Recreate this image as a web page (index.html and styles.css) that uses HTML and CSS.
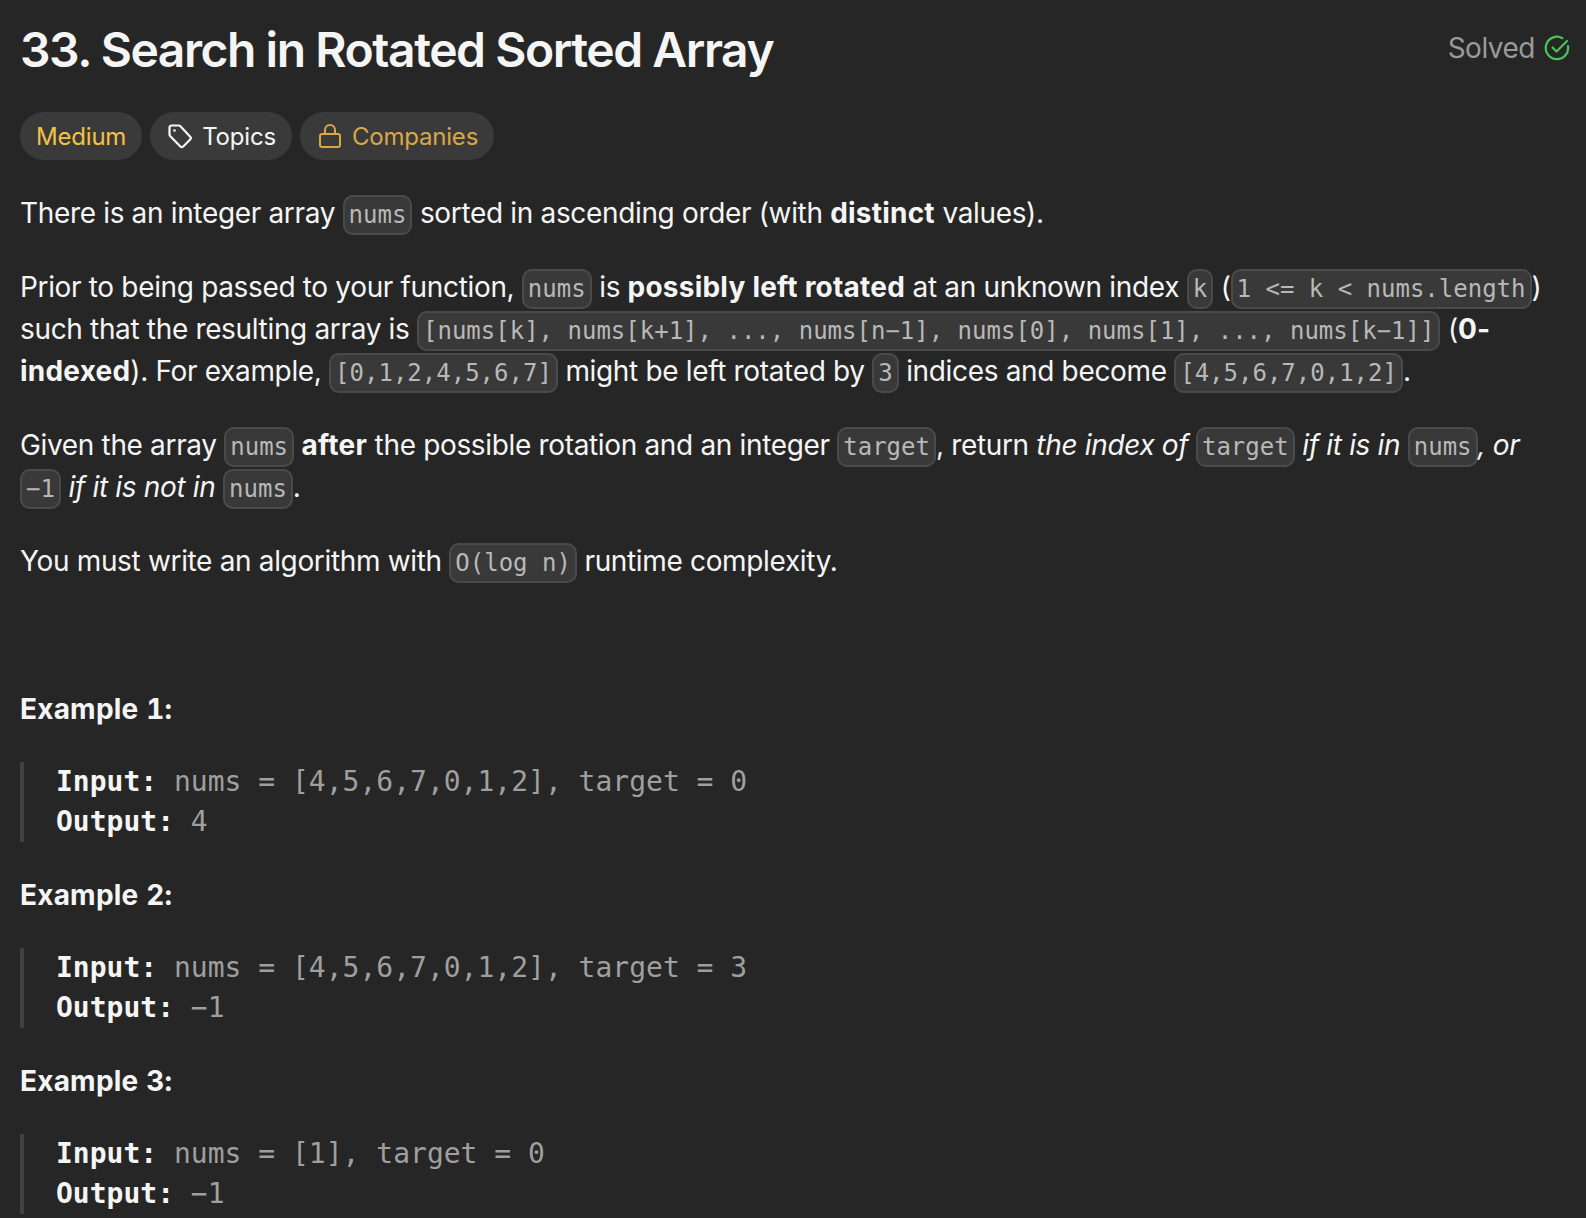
FILE: index.html
```html
<!DOCTYPE html>
<html lang="en">
<head>
    <meta charset="UTF-8">
    <meta name="viewport" content="width=device-width, initial-scale=1.0">
    <title>Search in Rotated Sorted Array</title>
    <link rel="stylesheet" href="styles.css">
</head>
<body>
    <div class="container">
        <div class="header">
            <h1>33. Search in Rotated Sorted Array</h1>
            <div class="solved">
                Solved
                <svg width="26" height="26" viewBox="0 0 26 26" fill="none" stroke="#4cc35a" stroke-width="2.2" stroke-linecap="round" stroke-linejoin="round">
                    <path d="M24 11.2A11.2 11.2 0 1 1 18.4 3.2"/>
                    <path d="M8.5 12.5l4 4L23 6"/>
                </svg>
            </div>
        </div>

        <div class="tags">
            <span class="tag medium">Medium</span>
            <span class="tag">
                <svg width="28" height="26" viewBox="-1 0 28 26" fill="none" stroke="currentColor" stroke-width="2.2" stroke-linejoin="round">
                    <path d="M2.5 4.500a2 2 0 0 1 2-2h7.200a2 2 0 0 1 1.500.6l10 10.600a2 2 0 0 1 0 2.800l-7 7a2 2 0 0 1-2.800 0L3.100 12.900a2 2 0 0 1-.6-1.500z"/>
                    <circle cx="7.500" cy="7.500" r="1.300" fill="currentColor" stroke="none"/>
                </svg>
                Topics
            </span>
            <span class="tag companies">
                <svg width="28" height="26" viewBox="0 0 28 26" fill="none" stroke="currentColor" stroke-width="2" stroke-linejoin="round">
                    <rect x="4" y="11" width="20" height="13" rx="2"/>
                    <path d="M9 11V7a5 5 0 0 1 10 0v4"/>
                </svg>
                Companies
            </span>
        </div>

        <div class="description">
            <p>There is an integer array <code>nums</code> sorted in ascending order (with <strong>distinct</strong> values).</p>

            <p>Prior to being passed to your function, <code>nums</code> is <strong>possibly left rotated</strong> at an unknown index <code>k</code> (<code>1 &lt;= k &lt; nums.length</code>) such that the resulting array is <code>[nums[k], nums[k+1], ..., nums[n&minus;1], nums[0], nums[1], ..., nums[k&minus;1]]</code> (<strong>0-indexed</strong>). For example, <code>[0,1,2,4,5,6,7]</code> might be left rotated by <code>3</code> indices and become <code>[4,5,6,7,0,1,2]</code>.</p>

            <p>Given the array <code>nums</code> <strong>after</strong> the possible rotation and an integer <code>target</code>, return <em>the index of </em><code>target</code><em> if it is in </em><code>nums</code><em>, or </em><code>&minus;1</code><em> if it is not in </em><code>nums</code>.</p>

            <p>You must write an algorithm with <code>O(log n)</code> runtime complexity.</p>

            <p class="spacer">&nbsp;</p>

            <p class="example-title"><strong>Example 1:</strong></p>
            <pre><strong>Input:</strong> nums = [4,5,6,7,0,1,2], target = 0
<strong>Output:</strong> 4</pre>

            <p class="example-title"><strong>Example 2:</strong></p>
            <pre><strong>Input:</strong> nums = [4,5,6,7,0,1,2], target = 3
<strong>Output:</strong> &minus;1</pre>

            <p class="example-title"><strong>Example 3:</strong></p>
            <pre><strong>Input:</strong> nums = [1], target = 0
<strong>Output:</strong> &minus;1</pre>
        </div>
    </div>
</body>
</html>
```

FILE: styles.css
```css
html, body {
    height: 1218px;
    overflow: hidden;
}

body {
    font-family: Inter, "Noto Sans", sans-serif;
    background-color: #262626;
    color: #f5f5f5;
    margin: 0;
    padding: 0;
}

.container {
    padding: 20px 16px 0 20px;
}

.header {
    display: flex;
    justify-content: space-between;
    align-items: flex-start;
}

h1 {
    margin: 0;
    font-size: 48px;
    line-height: 60px;
    font-weight: 600;
    letter-spacing: -1.45px;
}

.solved {
    display: flex;
    align-items: center;
    gap: 9px;
    margin-top: 12px;
    height: 32px;
    color: #9a9a9a;
    font-size: 28px;
    letter-spacing: -0.5px;
}

.tags {
    display: flex;
    gap: 8px;
    margin-top: 32px;
}

.tag {
    display: flex;
    align-items: center;
    gap: 8px;
    height: 48px;
    padding: 0 16px;
    border-radius: 24px;
    background: #3a3a3a;
    font-size: 24px;
    letter-spacing: -0.2px;
}

.medium {
    color: #f5c242;
}

.companies {
    color: #dba648;
}

.description {
    margin-top: 32px;
    padding-right: 20px;
    font-size: 28px;
    line-height: 42px;
    letter-spacing: -0.34px;
}

p {
    margin: 0 0 32px;
}

code {
    font-family: "DejaVu Sans Mono", monospace;
    font-size: 24px;
    line-height: 1;
    letter-spacing: 0;
    color: #b8b8b8;
    background: #393939;
    border: 2px solid #4a4a4a;
    border-radius: 10px;
    padding: 4px;
}

strong {
    font-weight: 700;
    letter-spacing: 0.22px;
}

.example-title {
    font-variant-numeric: tabular-nums;
}

pre {
    margin: 0 0 32px;
    padding: 0 0 0 32px;
    border-left: 4px solid #414141;
    font-family: "DejaVu Sans Mono", monospace;
    font-size: 28px;
    line-height: 40px;
    letter-spacing: 0;
    color: #9f9f9f;
}

pre strong {
    color: #f5f5f5;
    letter-spacing: 0;
}
```
